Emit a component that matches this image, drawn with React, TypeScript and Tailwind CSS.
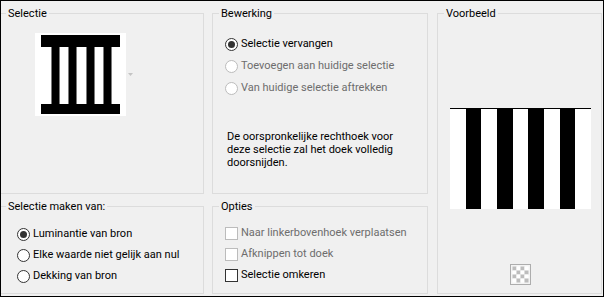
import clsx from 'clsx';
import type { ReactNode } from 'react';

/* Win32-style group box: a fieldset whose legend sits on the top border */
function GroupBox({
    label,
    className,
    legendClassName,
    children,
}: {
    label: string;
    className?: string;
    legendClassName?: string;
    children?: ReactNode;
}) {
    return (
        <fieldset className={clsx('m-0 min-w-0 border border-[#dcdcdc] p-0', className)}>
            <legend className={clsx('px-[2px] leading-[15px]', legendClassName)}>{label}</legend>
            {children}
        </fieldset>
    );
}

function Radio({ checked, disabled }: { checked?: boolean; disabled?: boolean }) {
    return (
        <span
            className={clsx(
                'flex h-[13px] w-[13px] shrink-0 items-center justify-center rounded-full border bg-white',
                disabled ? 'border-[#bcbcbc]' : 'border-[#333333]',
            )}
        >
            {checked && <span className="h-[7px] w-[7px] rounded-full bg-[#333333]" />}
        </span>
    );
}

function Checkbox({ disabled }: { disabled?: boolean }) {
    return (
        <span
            className={clsx(
                'h-[13px] w-[13px] shrink-0 border bg-white',
                disabled ? 'border-[#bcbcbc]' : 'border-[#333333]',
            )}
        />
    );
}

function OptionRow({ control, label, disabled, height }: { control: ReactNode; label: string; disabled?: boolean; height: string }) {
    return (
        <div className={clsx('flex items-center gap-[3px]', height)}>
            {control}
            <span className={clsx('whitespace-nowrap', disabled ? 'text-[#6d6d6d]' : 'text-black')}>{label}</span>
        </div>
    );
}

/* Thumbnail of the selection source */
function SourceThumb() {
    const bars = [16, 33, 51, 68];
    return (
        <svg width="91" height="83" viewBox="0 0 91 83" className="block bg-white">
            {bars.map((x) => (
                <g key={x}>
                    <rect x={x} y="14" width="9" height="57" fill="#7a7a7a" />
                    <rect x={x + 1} y="14" width="7" height="57" fill="#000" />
                </g>
            ))}
            <rect x="6" y="2" width="79" height="12" fill="#000" />
            <rect x="6" y="71" width="79" height="10" fill="#000" />
        </svg>
    );
}

function CheckerIcon() {
    const cells = [0, 1, 2, 3];
    return (
        <svg width="21" height="21" viewBox="0 0 21 21" className="block">
            <rect x="0.5" y="0.5" width="20" height="20" fill="#f4f4f4" stroke="#adadad" />
            {cells.map((r) =>
                cells.map((c) => (
                    <rect
                        key={`${r}-${c}`}
                        x={2.5 + c * 4}
                        y={2.5 + r * 4}
                        width="4"
                        height="4"
                        fill={(r + c) % 2 === 0 ? '#bdbdbd' : '#ffffff'}
                    />
                )),
            )}
        </svg>
    );
}

export default function App() {
    const stripes = Array.from({ length: 9 }, (_, i) => i);

    return (
        <div className="flex h-[297px] w-[604px] border border-black bg-[#f0f0f0] pt-[5px] pb-[2px] font-['Roboto',sans-serif] text-[11px] text-black">
            {/* Left column */}
            <div className="flex w-[203px] flex-col gap-[5px]">
                <GroupBox label="Selectie" className="h-[188px] border-l-0" legendClassName="ml-[5px]">
                    <div className="ml-[34px] mt-[12px] flex items-center gap-[2px]">
                        <SourceThumb />
                        <svg width="5" height="3" viewBox="0 0 5 3" className="block">
                            <polygon points="0,0 5,0 2.5,3" fill="#c4c4c4" />
                        </svg>
                    </div>
                </GroupBox>
                <GroupBox label="Selectie maken van:" className="flex-1 border-l-0" legendClassName="ml-[5px]">
                    <div className="ml-[16px] mt-[10px] flex flex-col">
                        <OptionRow height="h-[21px]" control={<Radio checked />} label="Luminantie van bron" />
                        <OptionRow height="h-[21px]" control={<Radio />} label="Elke waarde niet gelijk aan nul" />
                        <OptionRow height="h-[21px]" control={<Radio />} label="Dekking van bron" />
                    </div>
                </GroupBox>
            </div>

            {/* Middle column */}
            <div className="ml-[8px] flex w-[216px] flex-col gap-[5px]">
                <GroupBox label="Bewerking" className="h-[188px]" legendClassName="ml-[6px]">
                    <div className="ml-[12px] mt-[12px] flex flex-col">
                        <OptionRow height="h-[22px]" control={<Radio checked />} label="Selectie vervangen" />
                        <OptionRow height="h-[22px]" control={<Radio disabled />} label="Toevoegen aan huidige selectie" disabled />
                        <OptionRow height="h-[22px]" control={<Radio disabled />} label="Van huidige selectie aftrekken" disabled />
                    </div>
                    <p className="ml-[14px] mt-[31px] leading-[13px]">
                        De oorspronkelijke rechthoek voor
                        <br />
                        deze selectie zal het doek volledig
                        <br />
                        doorsnijden.
                    </p>
                </GroupBox>
                <GroupBox label="Opties" className="flex-1" legendClassName="ml-[6px]">
                    <div className="ml-[12px] mt-[9px] flex flex-col">
                        <OptionRow height="h-[21px]" control={<Checkbox disabled />} label="Naar linkerbovenhoek verplaatsen" disabled />
                        <OptionRow height="h-[21px]" control={<Checkbox disabled />} label="Afknippen tot doek" disabled />
                        <OptionRow height="h-[21px]" control={<Checkbox />} label="Selectie omkeren" />
                    </div>
                </GroupBox>
            </div>

            {/* Right column */}
            <div className="ml-[9px] flex w-[165px] flex-col">
                <GroupBox label="Voorbeeld" className="flex-1" legendClassName="ml-[6px]">
                    <div className="ml-[12px] mt-[87px] flex h-[101px] w-[141px] border-t border-black">
                        {stripes.map((i) => (
                            <div key={i} className={clsx('flex-1', i % 2 === 0 ? 'bg-white' : 'bg-black')} />
                        ))}
                    </div>
                    <div className="ml-[72px] mt-[55px] w-fit">
                        <CheckerIcon />
                    </div>
                </GroupBox>
            </div>
        </div>
    );
}
